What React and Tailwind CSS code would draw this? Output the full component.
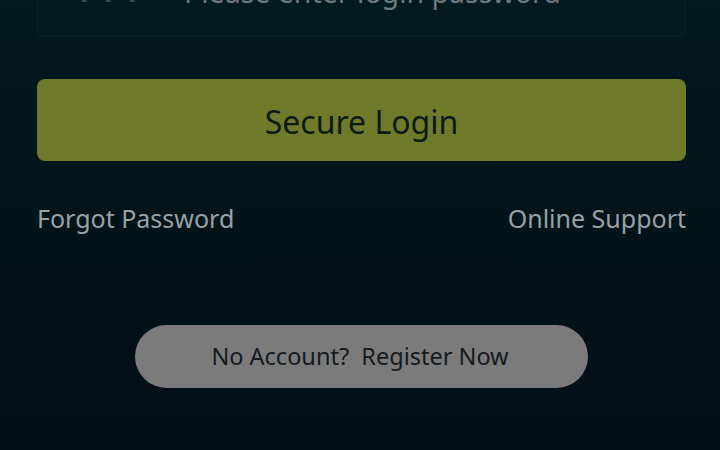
import React from 'react';

const App = () => {
  return (
    <div className="w-[720px] h-[450px] overflow-hidden bg-gradient-to-b from-[#04181f] to-[#020e15] font-['Noto_Sans',sans-serif]">
      <div className="pl-[37px] pr-[34px]">
        {/* Password field (cut off at the top) */}
        <div className="-mt-[41px] h-[78px] border border-[#0b222a] rounded-md bg-[#031a21] flex items-start pl-[34px]">
          <span className="mt-[17px] text-[28.5px] text-[#3c4a4f] leading-none whitespace-nowrap">✱✱✱</span>
          <span className="mt-[18px] ml-[40px] text-[28.5px] text-[#6d7b80] leading-none whitespace-nowrap">Please enter login password</span>
        </div>

        {/* Login button */}
        <button className="mt-[42px] w-full h-[82px] rounded-lg bg-[#6f7a2b] text-[#0d1a16] text-[32px] leading-none flex items-center justify-center pt-[3px]">
          Secure Login
        </button>

        {/* Links */}
        <div className="mt-[40px] flex justify-between text-[25px] leading-[34px] text-[#98a2a6]">
          <span>Forgot Password</span>
          <span>Online Support</span>
        </div>

        {/* Register */}
        <div className="mt-[90px] flex justify-center pr-[1px]">
          <div className="w-[453px] h-[63px] rounded-full bg-[#7b7b7b] flex items-center justify-center text-[23.5px] text-[#141a1d] pr-[2px]">
            No Account?&nbsp;&nbsp;Register Now
          </div>
        </div>
      </div>
    </div>
  );
};

export default App;
